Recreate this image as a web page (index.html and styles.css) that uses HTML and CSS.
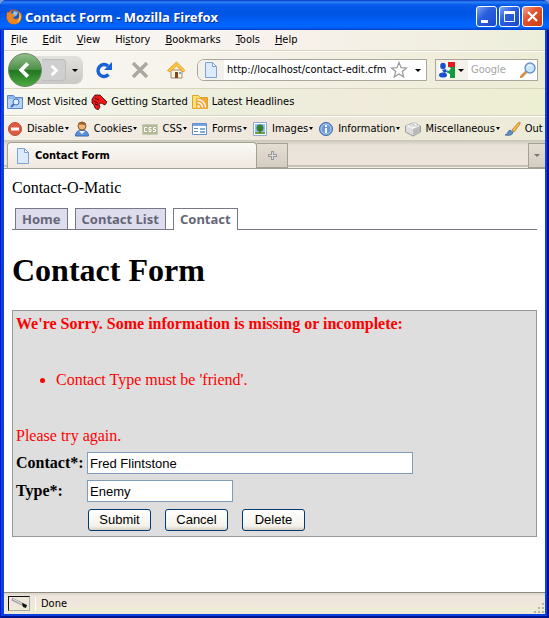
FILE: index.html
```
<!DOCTYPE html>
<html lang="en">
<head>
    <meta charset="UTF-8">
    <meta name="viewport" content="width=device-width, initial-scale=1.0">
    <title>Contact Form</title>
    <link rel="stylesheet" href="styles.css">
</head>
<body>
<div class="window">
    <header class="titlebar">
        <svg class="icon" viewBox="0 0 16 16">
            <circle cx="8" cy="8" r="7.5" fill="#d9660d"/>
            <circle cx="8.500" cy="6.500" r="5" fill="#2458b8"/>
            <path d="M8 2l4 1-1 3-3 2-2-2z" fill="#8ac4ee"/>
            <path d="M1 3l2 1 2-1 1 2 3 1-2 2c1 3 5 3 7-1l1-4c2 6-1 12-7 12S0 10 1 3z" fill="#ee8420"/>
            <path d="M13 3c3 4 2 9-2 11 2-3 3-6 2-11z" fill="#ffd15a"/>
        </svg>
        <span class="title">Contact Form - Mozilla Firefox</span>
        <button class="win-btn" aria-label="Minimize">
            <svg viewBox="0 0 19 19"><path d="M4 13h7v3H4z" fill="#fff"/></svg>
        </button>
        <button class="win-btn" aria-label="Maximize">
            <svg viewBox="0 0 19 19"><path d="M4.500 5.500h10v9h-10zM4 5.500h11" stroke="#fff" fill="none"/><path d="M4 4h11v3H4z" fill="#fff"/></svg>
        </button>
        <button class="win-btn close" aria-label="Close">
            <svg viewBox="0 0 19 19"><path d="M5 5l9 9M14 5l-9 9" stroke="#fff" stroke-width="2.200"/></svg>
        </button>
    </header>

    <nav class="menubar">
        <button><u>F</u>ile</button>
        <button><u>E</u>dit</button>
        <button><u>V</u>iew</button>
        <button>Hi<u>s</u>tory</button>
        <button><u>B</u>ookmarks</button>
        <button><u>T</u>ools</button>
        <button><u>H</u>elp</button>
    </nav>

    <div class="navbar">
        <div class="history">
            <button class="back" aria-label="Back">
                <svg viewBox="0 0 32 32"><path d="M19 9l-7 7 7 7" fill="none" stroke="#fff" stroke-width="4"/></svg>
            </button>
            <button class="forward" aria-label="Forward">
                <svg viewBox="0 0 24 22"><path d="M10 6l5 5-5 5" fill="none" stroke="#fff" stroke-width="3"/></svg>
            </button>
            <button class="recent" aria-label="Recent pages"><span class="arrow"></span></button>
        </div>
        <button class="tool" aria-label="Reload">
            <svg viewBox="0 0 18 18"><path d="M13.500 13.500A6 6 0 1 1 13 5" fill="none" stroke="#1862d8" stroke-width="3.400"/><path d="M17 1v8H9z" fill="#1862d8"/></svg>
        </button>
        <button class="tool" aria-label="Stop">
            <svg viewBox="0 0 18 18"><path d="M2 2l14 14M16 2L2 16" stroke="#aaa99f" stroke-width="3.500"/></svg>
        </button>
        <button class="tool" aria-label="Home">
            <svg viewBox="0 0 18 18"><path d="M4 9h11v8H4z" fill="#fff5db" stroke="#998b78"/><path d="M.5 9.500L9.500 1 18 9.500l-2 1.500-6.500-6L3 11z" fill="#ffc83c" stroke="#dd9122" stroke-width=".8"/><path d="M8 11h3v6H8z" fill="#854519"/><path d="M12 11h2v2h-2z" fill="#6ea7df"/></svg>
        </button>
        <div class="urlbar">
            <span class="site"><svg class="icon" viewBox="0 0 16 16"><use href="#page"/></svg></span>
            <input type="text" aria-label="Location" value="http://localhost/contact-edit.cfm">
            <svg class="star" viewBox="0 0 18 18"><path d="M9 1.500l2.100 5.200 5.400.3-4.200 3.500 1.400 5.500L9 13l-4.700 3 1.400-5.500L1.500 7l5.400-.3z" fill="#fff" stroke="#999" stroke-width="1.200"/></svg>
            <span class="arrow"></span>
        </div>
        <div class="searchbar">
            <button class="engine" aria-label="Search engine">
                <svg class="icon" viewBox="0 0 16 16">
                    <path d="M9 0h7v5H8z" fill="#e21b1b"/><path d="M8 5h8v6H8z" fill="#109c3c"/><path d="M9 11h7v5H9z" fill="#109c3c"/>
                    <path d="M0 0h9v5l-1 5 2 6H0z" fill="#fff"/>
                    <ellipse cx="4" cy="4" rx="2.800" ry="3.200" fill="#1b4fd0"/><path d="M3 8l4-1 1 3-3 1z" fill="#1b4fd0"/><ellipse cx="4" cy="13" rx="4" ry="2.600" fill="#1b4fd0"/><path d="M9 5l3 1-2 3-2-1zM9 11l2 1v4H8z" fill="#fff"/>
                </svg>
                <span class="arrow"></span>
            </button>
            <input type="text" aria-label="Search" placeholder="Google">
            <svg class="icon" viewBox="0 0 16 16"><path d="M1 15l5-5" stroke="#d49253" stroke-width="3" stroke-linecap="round"/><circle cx="10" cy="6" r="5" fill="#c6e6fb" stroke="#6a90c8" stroke-width="1.400"/><path d="M7 5c1-2 3-2 5-1" stroke="#fff" fill="none"/></svg>
        </div>
    </div>

    <div class="bookmarks">
        <a href="#"><svg class="icon" viewBox="0 0 16 16"><path d="M.5 1.500h6l1.500 2h7.500v11H.5z" fill="#8eb7ee" stroke="#5686cc"/><path d="M1 5h14v9H1z" fill="#b9d4f7"/><circle cx="9" cy="8" r="3" fill="#e0eeff" stroke="#3e6fb7"/><path d="M4 13l3-3" stroke="#3e6fb7" stroke-width="2"/></svg>Most Visited</a>
        <a href="#"><svg class="icon" viewBox="0 0 16 16"><path d="M1 5l3-4 5 0 3 3 4 4-2 3-4-2-2 1 1 3-2 3-3-2-1-3-2-2z" fill="#ec1717" stroke="#3c0505" stroke-width=".8"/><path d="M4 4l4 2M3 7l4 2M4 10l3 1" stroke="#4f0505"/></svg>Getting Started</a>
        <a href="#"><svg class="icon" viewBox="0 0 16 16"><path d="M.5 1.500h6l1.500 2h7.500v11H.5z" fill="#ffe074" stroke="#d9a52c"/><path d="M4 4h11v11H4z" fill="#f7a634"/><circle cx="6.500" cy="12.500" r="1.300" fill="#fff"/><path d="M5.500 8.500a5 5 0 0 1 5 5M5.500 5.500a8 8 0 0 1 8 8" fill="none" stroke="#fff" stroke-width="1.400"/></svg>Latest Headlines</a>
    </div>

    <div class="devbar">
        <button><svg class="icon" viewBox="0 0 16 16"><circle cx="8" cy="8" r="6.500" fill="#df5a45" stroke="#bb4b3b"/><path d="M4 6.500h8v3H4z" fill="#fff"/></svg>Disable<span class="arrow"></span></button>
        <button><svg class="icon" viewBox="0 0 16 16"><path d="M1.500 15c0-4 3-6 6.500-6s6.500 2 6.500 6z" fill="#5a91de" stroke="#3767b1"/><path d="M5 10l3 3 3-3z" fill="#fff"/><circle cx="8" cy="5" r="4" fill="#efb574" stroke="#85582b"/><path d="M4 4c1-4 7-4 8 0-3 0-4-1-8 0z" fill="#9a602a"/></svg>Cookies<span class="arrow"></span></button>
        <button><svg class="icon" viewBox="0 0 16 16"><path d="M.5 3.500h15v10H.5z" fill="#b5b894" stroke="#c8cbb3"/><path d="M5 6.500H2.500v4H5M9.500 6.500H7v2h2v2H6.500M14 6.500h-2.500v2h2v2H11" fill="none" stroke="#fff"/></svg>CSS<span class="arrow"></span></button>
        <button><svg class="icon" viewBox="0 0 16 16"><path d="M.5 2.500h14v11H.5z" fill="#fff" stroke="#648fc8"/><path d="M1 3h13v2H1z" fill="#75a4e1"/><path d="M2 7.500h4M2 10.500h4" stroke="#6688b3"/><path d="M8 7h5v2H8zM8 10h5v2H8z" fill="#87aee1"/></svg>Forms<span class="arrow"></span></button>
        <button><svg class="icon" viewBox="0 0 16 16"><path d="M1.500 1.500h13v13h-13z" fill="#fff" stroke="#8eabcb"/><path d="M3 3h10v10H3z" fill="#8dc0f2"/><path d="M3 11h10v2H3z" fill="#66a33e"/><circle cx="8" cy="7" r="3.500" fill="#368235"/><path d="M8 8v4" stroke="#70471f"/></svg>Images<span class="arrow"></span></button>
        <button><svg class="icon" viewBox="0 0 16 16"><circle cx="8" cy="8" r="6.500" fill="#6c9ad9" stroke="#3e68a8"/><circle cx="8" cy="8" r="5" fill="none" stroke="#b7d0f1"/><path d="M7 4h2v2H7zM7 7h2v5H7z" fill="#fff"/></svg>Information<span class="arrow"></span></button>
        <button><svg class="icon" viewBox="0 0 16 16"><path d="M.5 5L8 2l7.500 3v6L8 15 .5 11z" fill="#ddd" stroke="#999"/><path d="M1 5l7 3 7-3-7-3z" fill="#f6f6f6"/><path d="M8 8v6.500l7-3.500V5z" fill="#bbb"/><path d="M5 3h3v2H5zM9 2h3v3H9z" fill="#fff" stroke="#aaa" stroke-width=".6"/></svg>Miscellaneous<span class="arrow"></span></button>
        <button><svg class="icon" viewBox="0 0 16 16"><path d="M7 9l6-7 2-1v2L9 11z" fill="#f4b742" stroke="#b6771c" stroke-width=".7"/><path d="M0 14c3 0 2-4 5-5l3 2c0 3-4 4-8 3z" fill="#5f8cc4" stroke="#3a639b" stroke-width=".7"/></svg>Out</button>
    </div>

    <div class="tabstrip">
        <button class="tab">
            <svg class="icon" viewBox="0 0 16 16"><g id="page"><path d="M2.500.5h7l4 4v11h-11z" fill="#dcebfb" stroke="#7ba3d6"/><path d="M9.500.5v4h4z" fill="#fff" stroke="#7ba3d6"/></g></svg>
            Contact Form
        </button>
        <button class="new-tab" aria-label="New tab"><svg viewBox="0 0 9 9"><path d="M3 0h3v3h3v3H6v3H3V6H0V3h3z" fill="#999"/><path d="M4 1h1v3h3v1H5v3H4V5H1V4h3z" fill="#ddd"/></svg></button>
        <button class="all-tabs" aria-label="List all tabs"><span class="arrow"></span></button>
    </div>

    <main class="page">
        <p class="brand">Contact-O-Matic</p>
        <ul class="site-nav">
            <li><a href="#">Home</a></li>
            <li><a href="#">Contact List</a></li>
            <li><a href="#" class="current">Contact</a></li>
        </ul>
        <h1>Contact Form</h1>
        <form class="contact-form">
            <div class="error">
                <strong>We're Sorry. Some information is missing or incomplete:</strong>
                <ul>
                    <li>Contact Type must be 'friend'.</li>
                </ul>
                <p>Please try again.</p>
            </div>
            <div class="fields">
                <label for="contact">Contact*:</label>
                <input type="text" id="contact" class="long" value="Fred Flintstone">
                <label for="type">Type*:</label>
                <input type="text" id="type" class="short" value="Enemy">
                <div class="buttons">
                    <button type="submit">Submit</button>
                    <button type="button">Cancel</button>
                    <button type="button">Delete</button>
                </div>
            </div>
        </form>
    </main>

    <footer class="statusbar">
        <span class="debug"><svg viewBox="0 0 20 13"><path d="M3 2l12 6" stroke="#999" stroke-width="3"/><path d="M4 2l9 5" stroke="#eee"/><path d="M13 6l5 2-1 3-3-1z" fill="#111"/></svg></span>
        <span class="status">Done</span>
        <svg class="grip" viewBox="0 0 12 12"><path d="M9 1h2v2H9zM5 5h2v2H5zM9 5h2v2H9zM1 9h2v2H1zM5 9h2v2H5zM9 9h2v2H9z" fill="#b5b29d"/></svg>
    </footer>
</div>
</body>
</html>
```
FILE: styles.css
```
* {
    box-sizing: border-box;
}

body {
    margin: 0;
    background: #7a9be0;
}

button, input {
    font: inherit;
    color: inherit;
    margin: 0;
    padding: 0;
    border: 0;
    background: none;
}

svg {
    display: block;
    flex: none;
}

.icon {
    width: 16px;
    height: 16px;
}

.arrow {
    border: 3px solid transparent;
    border-top-color: #000;
    border-bottom: 0;
}

/* window frame */
.window {
    display: flex;
    flex-direction: column;
    min-height: 100vh;
    padding: 0 4px 4px;
    border-radius: 7px 7px 0 0;
    background: #0a40e0;
    box-shadow: inset 1px 0 #0019cf, inset -2px 0 #00138c, inset 0 -2px #00138c;
    font-family: "DejaVu Sans Condensed", "DejaVu Sans", sans-serif;
    font-size: 11px;
    line-height: 14px;
    overflow: hidden;
}

.titlebar {
    display: flex;
    align-items: center;
    gap: 2px;
    height: 30px;
    margin: 0 -4px;
    padding: 3px 6px 0;
    background: linear-gradient(#0830c0, #2a86f8 2px, #0558e8 5px, #0054e3 14px, #0062fa 22px, #0066ff 27px, #0040c8);
    color: #fff;
}

.title {
    flex: 1;
    padding-left: 1px;
    font-family: "Noto Sans", sans-serif;
    font-size: 13px;
    font-weight: bold;
    text-shadow: 1px 1px #0a2f94;
}

.win-btn {
    width: 21px;
    height: 21px;
    border: 1px solid #fff;
    border-radius: 3px;
    background: linear-gradient(135deg, #7fa5f3, #2a5fe0 40%, #1b48cd);
}

.win-btn.close {
    background: linear-gradient(135deg, #f0a58c, #e25430 40%, #c93a13);
}

/* menus and toolbars */
.menubar {
    display: flex;
    gap: 15px;
    height: 21px;
    padding: 0 7px;
    border-bottom: 1px solid #d9d4c0;
    background: linear-gradient(90deg, #f8f8f6, #f8f1ec 50%, #edeeda);
}

.navbar {
    display: flex;
    align-items: center;
    height: 38px;
    padding: 0 7px 0 4px;
    border-top: 1px solid #fff;
    border-bottom: 1px solid #d9d4c0;
    background: linear-gradient(90deg, #f8f7f3, #f5f1e6 50%, #edecd4);
}

.history {
    display: flex;
    align-items: center;
    height: 28px;
    margin-right: 3px;
    border-radius: 14px 8px 8px 14px;
    background: linear-gradient(#e2e1de, #c9c8c5);
}

.back {
    width: 34px;
    height: 34px;
    padding: 1px;
    border: 1px solid #6a8a66;
    border-radius: 50%;
    background: linear-gradient(#91bd8b, #4e9049 48%, #23761f 52%, #4dac43);
}

.forward {
    width: 24px;
    height: 22px;
    border: 1px solid #bdbdbd;
    border-left: 0;
    border-radius: 0 4px 4px 0;
    background: #cfcfcf;
}

.recent {
    display: flex;
    justify-content: center;
    width: 17px;
}

.tool {
    width: 36px;
    padding: 0 9px;
}

.urlbar, .searchbar {
    display: flex;
    align-items: center;
    height: 22px;
    border: 1px solid #a8a79d;
    background: #fff;
}

.urlbar {
    flex: 1;
    min-width: 0;
    margin-left: 3px;
    padding-right: 5px;
    border-radius: 7px 0 0 7px;
}

.site {
    padding: 2px 5px;
    margin-right: 3px;
    background: #f3f1ea;
    border-radius: 7px 0 0 7px;
}

.urlbar input {
    flex: 1;
    min-width: 0;
}

.star {
    width: 18px;
    height: 18px;
    margin-right: 7px;
}

.searchbar {
    width: 103px;
    margin-left: 8px;
    padding-right: 1px;
}

.engine {
    display: flex;
    align-items: center;
    gap: 3px;
    height: 20px;
    padding: 0 4px 0 3px;
    background: #f3f1ea;
}

.searchbar input {
    flex: 1;
    min-width: 0;
    padding-left: 3px;
}

.searchbar input::placeholder {
    color: #a5a5a0;
    opacity: 1;
}

.bookmarks, .devbar {
    display: flex;
    align-items: center;
    overflow: hidden;
    white-space: nowrap;
}

.bookmarks {
    gap: 4px;
    height: 27px;
    padding: 0 3px;
    border-bottom: 1px solid #d9d4c0;
    background: linear-gradient(90deg, #f7f7f0, #ecefdd 40%, #f0ebdb 65%, #edefd2);
}

.bookmarks a {
    display: flex;
    align-items: center;
    gap: 4px;
    color: #000;
    text-decoration: none;
}

.devbar {
    gap: 5px;
    height: 24px;
    padding: 0 0 0 3px;
    border-top: 1px solid #fff;
    background: linear-gradient(90deg, #f4f0e8, #efe7dc 50%, #edecd8);
}

.devbar button {
    display: flex;
    flex: none;
    align-items: center;
    gap: 4px;
}

.devbar .arrow {
    border-width: 3px 2px 0;
    margin-left: -3px;
}

.tabstrip {
    display: flex;
    align-items: flex-end;
    height: 29px;
    padding-left: 3px;
    border-bottom: 1px solid #a3a18f;
    background: linear-gradient(#c6c3b6, #e9e2d8 5px, #ece5dc 25px, #9f9c8c 26px, #f0eee4 27px);
}

.tab {
    display: flex;
    align-items: center;
    gap: 4px;
    width: 250px;
    height: 26px;
    padding: 0 7px;
    border: 1px solid #a3a18f;
    border-bottom: 0;
    border-radius: 4px 4px 0 0;
    background: linear-gradient(#fbfaf6, #f0e8e0);
    font-weight: bold;
}

.new-tab, .all-tabs {
    display: flex;
    align-items: center;
    justify-content: center;
    height: 25px;
    border: 1px solid #a3a18f;
    background: linear-gradient(#e3ddd2, #d5cdc3);
}

.new-tab {
    width: 31px;
    border-left: 0;
}

.new-tab svg {
    width: 9px;
}

.all-tabs {
    width: 17px;
    margin-left: auto;
    border-right: 0;
}

.all-tabs .arrow {
    border-top-color: #777;
}

/* page content */
.page {
    flex: 1;
    padding: 10px 8px;
    background: #fff;
    font: 16px/18px "Liberation Serif", serif;
}

.brand {
    margin: 0 0 11px;
}

.site-nav {
    display: flex;
    gap: 7px;
    margin: 0;
    padding: 0 3px;
    border-bottom: 1px solid #778;
    list-style: none;
    font: bold 13px/20px "Noto Sans", sans-serif;
}

.site-nav a {
    display: block;
    padding: 0 6px;
    border: 1px solid #778;
    border-bottom: 0;
    background: #dde;
    color: #667;
    text-decoration: none;
}

.site-nav .current {
    margin-bottom: -1px;
    padding-bottom: 1px;
    background: #fff;
}

h1 {
    margin: 22px 0 21px;
    font-size: 32px;
    line-height: 37px;
}

.contact-form {
    padding: 4px 3px;
    border: 1px solid #999;
    background: #dedede;
}

.error {
    color: #f00;
}

.error ul {
    margin: 38px 0;
    padding-left: 40px;
}

.error p {
    margin: 0;
}

.fields {
    display: grid;
    grid-template-columns: 68px 1fr;
    gap: 6px 3px;
    align-items: center;
    margin-top: 7px;
}

.fields label {
    font-weight: bold;
}

.fields input, .buttons button {
    height: 22px;
    font: 13px/16px "Liberation Sans", sans-serif;
}

.fields input {
    padding: 0 2px;
    border: 1px solid #7f9db9;
    background: #fff;
}

.fields .long {
    width: 326px;
    max-width: 100%;
}

.fields .short {
    width: 146px;
}

.buttons {
    grid-column: 2;
    display: flex;
    gap: 14px;
    padding: 1px;
}

.buttons button {
    min-width: 63px;
    padding: 0 10px;
    border: 1px solid #003c74;
    border-radius: 3px;
    background: linear-gradient(#fff, #f4f2ea 80%, #d8d0c4);
}

.statusbar {
    display: flex;
    align-items: center;
    height: 22px;
    padding-left: 4px;
    border-top: 1px solid #8f8d80;
    background: linear-gradient(#d8d3c8, #eee6dc 3px, #efe7dc 12px, #edecd4 16px, #ece9d8);
}

.debug {
    width: 22px;
    height: 15px;
    border: 1px solid #111;
    border-right-color: #aaa;
    border-bottom-color: #aaa;
}

.status {
    flex: 1;
    margin-left: 5px;
    padding-left: 5px;
    border-left: 1px solid #fff;
}

.grip {
    align-self: flex-end;
    width: 12px;
    height: 12px;
}
```
